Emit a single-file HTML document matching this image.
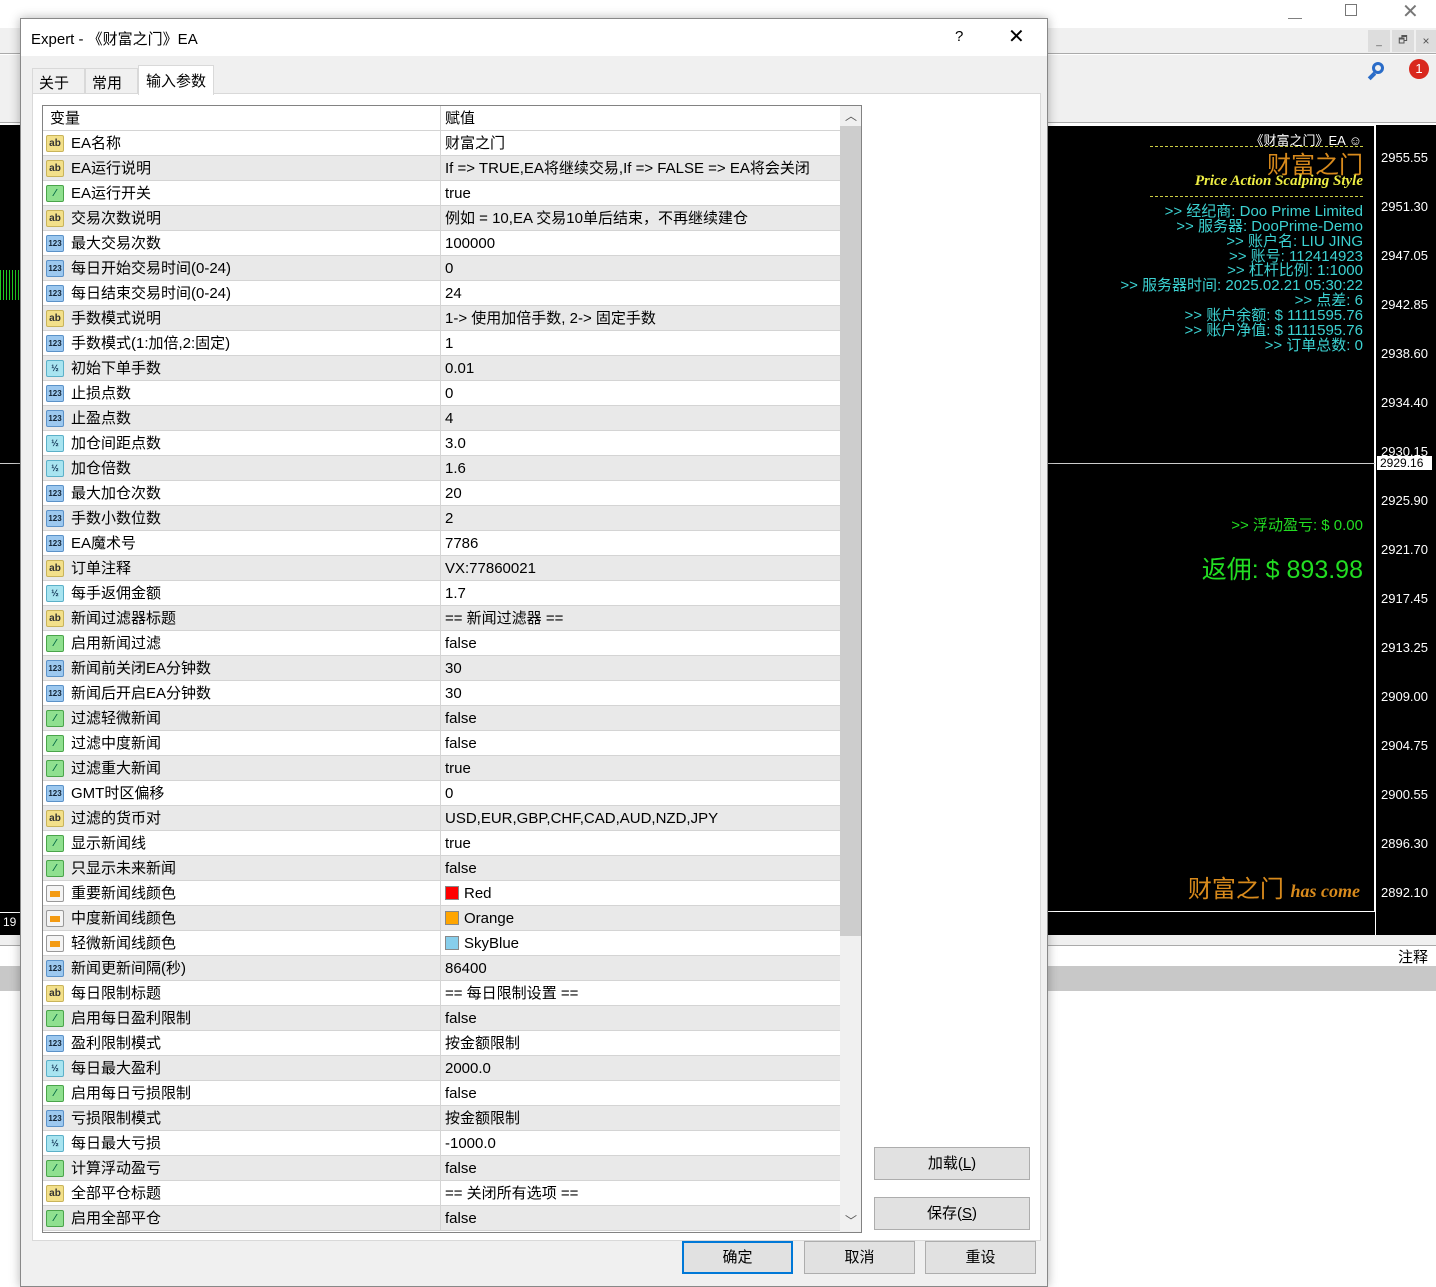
<!DOCTYPE html>
<html><head><meta charset="utf-8"><style>
*{margin:0;padding:0;box-sizing:border-box}
body{width:1436px;height:1287px;position:relative;overflow:hidden;background:#fff;font-family:"Liberation Sans","Noto Sans CJK SC",sans-serif;color:#000}
.a{position:absolute}
.row{position:absolute;left:0;width:797px;height:25px;border-bottom:1px solid #d4d4d4;font-size:15px;line-height:26px}
.row.g{background:#e9e9e9}
.row .n{position:absolute;left:28px;top:0;white-space:nowrap}
.row .v{position:absolute;left:402px;top:0;white-space:nowrap}
.row .d{position:absolute;left:397px;top:0;width:1px;height:25px;background:#d4d4d4}
.ic{position:absolute;left:3px;top:4px;width:18px;height:17px;border-radius:2px;font-size:10px;line-height:15px;text-align:center;font-weight:bold}
.ab{background:#f3e08a;border:1px solid #c9b45a;color:#333}
.in{background:#9cc8ef;border:1px solid #5b92c8;color:#123;font-size:8px}
.bo{background:#8fe08f;border:1px solid #4aa44a;color:#064}
.db{background:#a8e4f0;border:1px solid #5bb0c8;color:#135;font-size:9px}
.co{background:#f4f4f4;border:1px solid #999}
.co i{position:absolute;left:3px;top:5px;width:10px;height:6px;background:#f39a12}
.sw{display:inline-block;width:14px;height:14px;vertical-align:-2px;margin-right:5px;border:1px solid #888}
.btn{position:absolute;background:#e1e1e1;border:1px solid #adadad;font-size:15px;text-align:center;line-height:31px}
.pl{position:absolute;left:1381px;font-size:13px;color:#fff}
.cy{position:absolute;right:73px;font-size:15px;color:#3cd2d2;white-space:nowrap;line-height:15px}
</style></head><body>
<div class="a" style="left:0;top:0;width:1436px;height:28px;background:#fff"></div>
<div class="a" style="left:1288px;top:9px;font-size:14px;color:#777">—</div>
<div class="a" style="left:1345px;top:4px;width:12px;height:12px;border:1px solid #777"></div>
<div class="a" style="left:1402px;top:-1px;font-size:20px;color:#777">✕</div>
<div class="a" style="left:0;top:28px;width:1436px;height:26px;background:#f0f0f0;border-bottom:1px solid #aaa"></div>
<div class="a" style="left:1368px;top:30px;width:22px;height:22px;background:#ddd;font-size:10px;text-align:center;line-height:24px;color:#555">_</div>
<div class="a" style="left:1392px;top:30px;width:22px;height:22px;background:#ddd;font-size:10px;text-align:center;line-height:22px;color:#555">🗗</div>
<div class="a" style="left:1416px;top:30px;width:20px;height:22px;background:#ddd;font-size:12px;text-align:center;line-height:22px;color:#555">×</div>
<div class="a" style="left:0;top:55px;width:1436px;height:68px;background:#f0f0f0;border-bottom:1px solid #aaa"></div>
<div class="a" style="left:1372px;top:62px;width:12px;height:12px;border:3px solid #2a6cc8;border-radius:50%"></div>
<div class="a" style="left:1370px;top:72px;width:4px;height:8px;background:#2a6cc8;transform:rotate(45deg)"></div>
<div class="a" style="left:1409px;top:59px;width:20px;height:20px;background:#d9281e;border-radius:50%;color:#fff;font-size:13px;text-align:center;line-height:20px">1</div>
<div class="a" style="left:0;top:125px;width:1436px;height:810px;background:#000"></div>
<div class="a" style="left:1047px;top:125px;width:328px;height:787px;border:1px solid #fff;border-left:none"></div>
<div class="a" style="left:1375px;top:125px;width:1px;height:810px;background:#fff"></div>
<div class="a" style="left:0;top:463px;width:1375px;height:1px;background:#ccc"></div>
<div class="a" style="left:0;top:270px;width:20px;height:30px;background:repeating-linear-gradient(90deg,#2c2 0 1px,#000 1px 3px)"></div>
<div class="a" style="left:0;top:912px;width:20px;height:23px;border-top:1px solid #fff;color:#fff;font-size:12px;padding:2px 3px">19</div>
<div class="pl" style="top:150px">2955.55</div><div class="pl" style="top:199px">2951.30</div>
<div class="pl" style="top:248px">2947.05</div><div class="pl" style="top:297px">2942.85</div>
<div class="pl" style="top:346px">2938.60</div><div class="pl" style="top:395px">2934.40</div>
<div class="pl" style="top:444px">2930.15</div>
<div class="a" style="left:1377px;top:456px;width:55px;height:14px;background:#fff;color:#000;font-size:12px;line-height:14px;padding-left:3px">2929.16</div>
<div class="pl" style="top:493px">2925.90</div><div class="pl" style="top:542px">2921.70</div>
<div class="pl" style="top:591px">2917.45</div><div class="pl" style="top:640px">2913.25</div>
<div class="pl" style="top:689px">2909.00</div><div class="pl" style="top:738px">2904.75</div>
<div class="pl" style="top:787px">2900.55</div><div class="pl" style="top:836px">2896.30</div>
<div class="pl" style="top:885px">2892.10</div>
<div class="a" style="right:74px;top:130px;color:#fff;font-size:13px">《财富之门》EA ☺</div>
<div class="a" style="left:1150px;top:146px;width:213px;border-top:1px dashed #cc4"></div>
<div class="a" style="right:73px;top:152px;color:#d88a1c;font-size:24px;line-height:28px">财富之门</div>
<div class="a" style="right:73px;top:173px;color:#ee4;font-size:15px;font-style:italic;font-family:'Liberation Serif',serif;font-weight:bold">Price Action Scalping Style</div>
<div class="a" style="left:1150px;top:196px;width:213px;border-top:1px dashed #cc4"></div>
<div class="cy" style="top:204px">&gt;&gt; 经纪商: Doo Prime Limited</div>
<div class="cy" style="top:219px">&gt;&gt; 服务器: DooPrime-Demo</div>
<div class="cy" style="top:234px">&gt;&gt; 账户名: LIU JING</div>
<div class="cy" style="top:249px">&gt;&gt; 账号: 112414923</div>
<div class="cy" style="top:263px">&gt;&gt; 杠杆比例: 1:1000</div>
<div class="cy" style="top:278px">&gt;&gt; 服务器时间: 2025.02.21 05:30:22</div>
<div class="cy" style="top:293px">&gt;&gt; 点差: 6</div>
<div class="cy" style="top:308px">&gt;&gt; 账户余额: $ 1111595.76</div>
<div class="cy" style="top:323px">&gt;&gt; 账户净值: $ 1111595.76</div>
<div class="cy" style="top:338px">&gt;&gt; 订单总数: 0</div>
<div class="cy" style="top:518px;color:#2d2">&gt;&gt; 浮动盈亏: $ 0.00</div>
<div class="a" style="right:73px;top:550px;color:#2d2;font-size:25px">返佣: $ 893.98</div>
<div class="a" style="right:76px;top:869px;color:#d88a1c;font-size:24px;white-space:nowrap">财富之门 <span style="font-family:'Liberation Serif',serif;font-style:italic;font-weight:bold;font-size:18px">has come</span></div>
<div class="a" style="left:0;top:935px;width:1436px;height:10px;background:#f0f0f0"></div>
<div class="a" style="left:0;top:945px;width:1436px;height:20px;background:#fff;border-top:1px solid #aaa"></div>
<div class="a" style="left:1398px;top:946px;font-size:15px">注释</div>
<div class="a" style="left:0;top:966px;width:1436px;height:25px;background:#c8c8c8"></div>
<div class="a" style="left:20px;top:18px;width:1028px;height:1269px;background:#f0f0f0;border:1px solid #888;box-shadow:0 0 10px rgba(0,0,0,.3)"></div>
<div class="a" style="left:21px;top:19px;width:1026px;height:37px;background:#fff"></div>
<div class="a" style="left:31px;top:28px;font-size:15px">Expert - 《财富之门》EA</div>
<div class="a" style="left:955px;top:28px;font-size:15px">?</div>
<div class="a" style="left:1008px;top:24px;font-size:20px">✕</div>
<div class="a" style="left:32px;top:93px;width:1009px;height:1148px;background:#fff;border:1px solid #d9d9d9"></div>
<div class="a" style="left:32px;top:68px;width:53px;height:26px;border:1px solid #d9d9d9;border-bottom:none;font-size:15px;padding:3px 6px">关于</div>
<div class="a" style="left:85px;top:68px;width:53px;height:26px;border:1px solid #d9d9d9;border-bottom:none;font-size:15px;padding:3px 6px">常用</div>
<div class="a" style="left:138px;top:65px;width:76px;height:30px;background:#fff;border:1px solid #d9d9d9;border-bottom:none;font-size:15px;padding:4px 7px">输入参数</div>
<div class="a" style="left:42px;top:105px;width:820px;height:1128px;border:1px solid #828282;background:#fff;overflow:hidden">
<div class="a" style="left:0;top:0;width:797px;height:25px;font-size:15px;line-height:26px;border-bottom:1px solid #d4d4d4"><span class="a" style="left:7px">变量</span><span class="a" style="left:402px">赋值</span><span class="a" style="left:397px;top:0;width:1px;height:25px;background:#d4d4d4"></span></div>
<div class="a" style="left:797px;top:0;width:21px;height:1126px;background:#f0f0f0"></div>
<div class="a" style="left:797px;top:20px;width:21px;height:810px;background:#cdcdcd"></div>
<div class="a" style="left:802px;top:1px;font-size:12px;color:#555">︿</div>
<div class="a" style="left:802px;top:1106px;font-size:12px;color:#555">﹀</div>
<div class="a" style="left:0;top:25px;width:797px">
<div class="row" style="top:0"><span class="ic ab">ab</span><span class="n">EA名称</span><span class="d"></span><span class="v">财富之门</span></div>
<div class="row g" style="top:25px"><span class="ic ab">ab</span><span class="n">EA运行说明</span><span class="d"></span><span class="v">If =&gt; TRUE,EA将继续交易,If =&gt; FALSE =&gt; EA将会关闭</span></div>
<div class="row" style="top:50px"><span class="ic bo">⁄</span><span class="n">EA运行开关</span><span class="d"></span><span class="v">true</span></div>
<div class="row g" style="top:75px"><span class="ic ab">ab</span><span class="n">交易次数说明</span><span class="d"></span><span class="v">例如 = 10,EA 交易10单后结束，不再继续建仓</span></div>
<div class="row" style="top:100px"><span class="ic in">123</span><span class="n">最大交易次数</span><span class="d"></span><span class="v">100000</span></div>
<div class="row g" style="top:125px"><span class="ic in">123</span><span class="n">每日开始交易时间(0-24)</span><span class="d"></span><span class="v">0</span></div>
<div class="row" style="top:150px"><span class="ic in">123</span><span class="n">每日结束交易时间(0-24)</span><span class="d"></span><span class="v">24</span></div>
<div class="row g" style="top:175px"><span class="ic ab">ab</span><span class="n">手数模式说明</span><span class="d"></span><span class="v">1-&gt; 使用加倍手数, 2-&gt; 固定手数</span></div>
<div class="row" style="top:200px"><span class="ic in">123</span><span class="n">手数模式(1:加倍,2:固定)</span><span class="d"></span><span class="v">1</span></div>
<div class="row g" style="top:225px"><span class="ic db">½</span><span class="n">初始下单手数</span><span class="d"></span><span class="v">0.01</span></div>
<div class="row" style="top:250px"><span class="ic in">123</span><span class="n">止损点数</span><span class="d"></span><span class="v">0</span></div>
<div class="row g" style="top:275px"><span class="ic in">123</span><span class="n">止盈点数</span><span class="d"></span><span class="v">4</span></div>
<div class="row" style="top:300px"><span class="ic db">½</span><span class="n">加仓间距点数</span><span class="d"></span><span class="v">3.0</span></div>
<div class="row g" style="top:325px"><span class="ic db">½</span><span class="n">加仓倍数</span><span class="d"></span><span class="v">1.6</span></div>
<div class="row" style="top:350px"><span class="ic in">123</span><span class="n">最大加仓次数</span><span class="d"></span><span class="v">20</span></div>
<div class="row g" style="top:375px"><span class="ic in">123</span><span class="n">手数小数位数</span><span class="d"></span><span class="v">2</span></div>
<div class="row" style="top:400px"><span class="ic in">123</span><span class="n">EA魔术号</span><span class="d"></span><span class="v">7786</span></div>
<div class="row g" style="top:425px"><span class="ic ab">ab</span><span class="n">订单注释</span><span class="d"></span><span class="v">VX:77860021</span></div>
<div class="row" style="top:450px"><span class="ic db">½</span><span class="n">每手返佣金额</span><span class="d"></span><span class="v">1.7</span></div>
<div class="row g" style="top:475px"><span class="ic ab">ab</span><span class="n">新闻过滤器标题</span><span class="d"></span><span class="v">== 新闻过滤器 ==</span></div>
<div class="row" style="top:500px"><span class="ic bo">⁄</span><span class="n">启用新闻过滤</span><span class="d"></span><span class="v">false</span></div>
<div class="row g" style="top:525px"><span class="ic in">123</span><span class="n">新闻前关闭EA分钟数</span><span class="d"></span><span class="v">30</span></div>
<div class="row" style="top:550px"><span class="ic in">123</span><span class="n">新闻后开启EA分钟数</span><span class="d"></span><span class="v">30</span></div>
<div class="row g" style="top:575px"><span class="ic bo">⁄</span><span class="n">过滤轻微新闻</span><span class="d"></span><span class="v">false</span></div>
<div class="row" style="top:600px"><span class="ic bo">⁄</span><span class="n">过滤中度新闻</span><span class="d"></span><span class="v">false</span></div>
<div class="row g" style="top:625px"><span class="ic bo">⁄</span><span class="n">过滤重大新闻</span><span class="d"></span><span class="v">true</span></div>
<div class="row" style="top:650px"><span class="ic in">123</span><span class="n">GMT时区偏移</span><span class="d"></span><span class="v">0</span></div>
<div class="row g" style="top:675px"><span class="ic ab">ab</span><span class="n">过滤的货币对</span><span class="d"></span><span class="v">USD,EUR,GBP,CHF,CAD,AUD,NZD,JPY</span></div>
<div class="row" style="top:700px"><span class="ic bo">⁄</span><span class="n">显示新闻线</span><span class="d"></span><span class="v">true</span></div>
<div class="row g" style="top:725px"><span class="ic bo">⁄</span><span class="n">只显示未来新闻</span><span class="d"></span><span class="v">false</span></div>
<div class="row" style="top:750px"><span class="ic co"><i></i></span><span class="n">重要新闻线颜色</span><span class="d"></span><span class="v"><span class="sw" style="background:red"></span>Red</span></div>
<div class="row g" style="top:775px"><span class="ic co"><i></i></span><span class="n">中度新闻线颜色</span><span class="d"></span><span class="v"><span class="sw" style="background:orange"></span>Orange</span></div>
<div class="row" style="top:800px"><span class="ic co"><i></i></span><span class="n">轻微新闻线颜色</span><span class="d"></span><span class="v"><span class="sw" style="background:skyblue"></span>SkyBlue</span></div>
<div class="row g" style="top:825px"><span class="ic in">123</span><span class="n">新闻更新间隔(秒)</span><span class="d"></span><span class="v">86400</span></div>
<div class="row" style="top:850px"><span class="ic ab">ab</span><span class="n">每日限制标题</span><span class="d"></span><span class="v">== 每日限制设置 ==</span></div>
<div class="row g" style="top:875px"><span class="ic bo">⁄</span><span class="n">启用每日盈利限制</span><span class="d"></span><span class="v">false</span></div>
<div class="row" style="top:900px"><span class="ic in">123</span><span class="n">盈利限制模式</span><span class="d"></span><span class="v">按金额限制</span></div>
<div class="row g" style="top:925px"><span class="ic db">½</span><span class="n">每日最大盈利</span><span class="d"></span><span class="v">2000.0</span></div>
<div class="row" style="top:950px"><span class="ic bo">⁄</span><span class="n">启用每日亏损限制</span><span class="d"></span><span class="v">false</span></div>
<div class="row g" style="top:975px"><span class="ic in">123</span><span class="n">亏损限制模式</span><span class="d"></span><span class="v">按金额限制</span></div>
<div class="row" style="top:1000px"><span class="ic db">½</span><span class="n">每日最大亏损</span><span class="d"></span><span class="v">-1000.0</span></div>
<div class="row g" style="top:1025px"><span class="ic bo">⁄</span><span class="n">计算浮动盈亏</span><span class="d"></span><span class="v">false</span></div>
<div class="row" style="top:1050px"><span class="ic ab">ab</span><span class="n">全部平仓标题</span><span class="d"></span><span class="v">== 关闭所有选项 ==</span></div>
<div class="row g" style="top:1075px"><span class="ic bo">⁄</span><span class="n">启用全部平仓</span><span class="d"></span><span class="v">false</span></div>
</div></div>
<div class="btn" style="left:874px;top:1147px;width:156px;height:33px">加载(<u>L</u>)</div>
<div class="btn" style="left:874px;top:1197px;width:156px;height:33px">保存(<u>S</u>)</div>
<div class="btn" style="left:682px;top:1241px;width:111px;height:33px;border:2px solid #0078d7;line-height:29px">确定</div>
<div class="btn" style="left:804px;top:1241px;width:111px;height:33px">取消</div>
<div class="btn" style="left:925px;top:1241px;width:111px;height:33px">重设</div>
</body></html>
